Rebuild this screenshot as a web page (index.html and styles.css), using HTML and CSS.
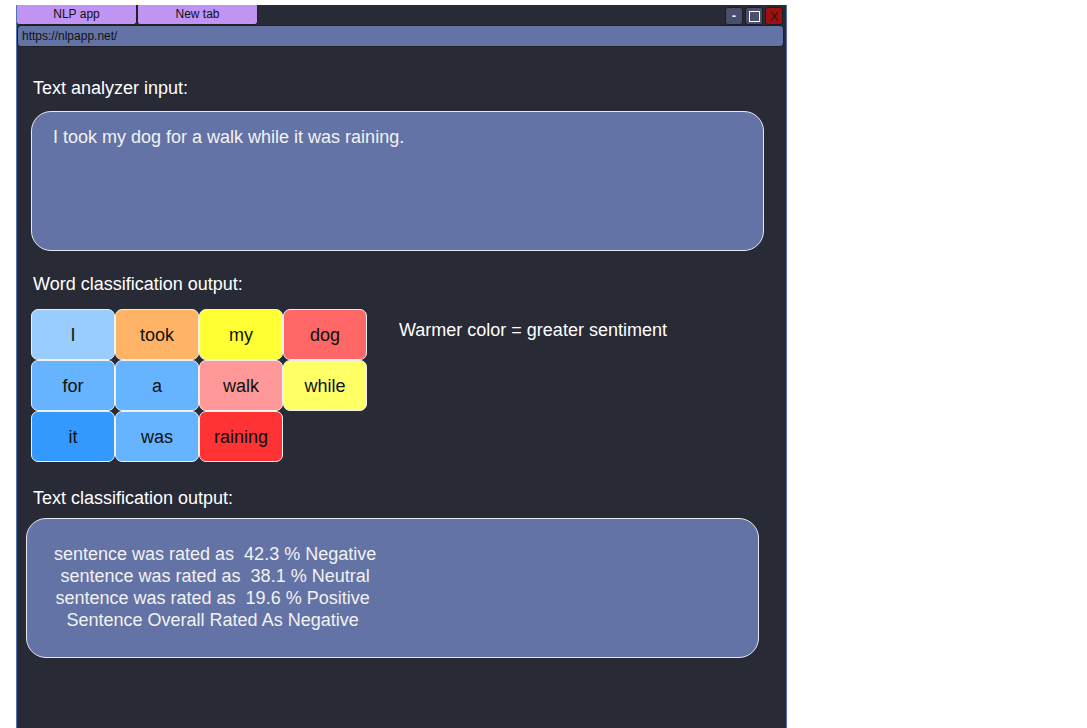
FILE: index.html
```html
<!DOCTYPE html>
<html>
<head>
<meta charset="utf-8">
<link rel="stylesheet" href="styles.css">
</head>
<body>
<div class="window">
  <div class="titlebar">
    <div class="tab">NLP app</div>
    <div class="tab">New tab</div>
    <div class="spacer"></div>
    <div class="ctrl ctrl-min">-</div>
    <div class="ctrl ctrl-max"><span class="sq"></span></div>
    <div class="ctrl ctrl-close">X</div>
  </div>
  <div class="urlbar">https://nlpapp.net/</div>
  <div class="content">
    <div class="label l1">Text analyzer input:</div>
    <div class="box input-box">I took my dog for a walk while it was raining.</div>
    <div class="label l2">Word classification output:</div>
    <div class="words-row">
      <div class="grid">
        <div class="cell c-i">I</div>
        <div class="cell c-took">took</div>
        <div class="cell c-my">my</div>
        <div class="cell c-dog">dog</div>
        <div class="cell c-for">for</div>
        <div class="cell c-a">a</div>
        <div class="cell c-walk">walk</div>
        <div class="cell c-while">while</div>
        <div class="cell c-it">it</div>
        <div class="cell c-was">was</div>
        <div class="cell c-raining">raining</div>
      </div>
      <div class="legend">Warmer color = greater sentiment</div>
    </div>
    <div class="label l3">Text classification output:</div>
    <div class="box output-box">
      <div class="result">sentence was rated as&nbsp; 42.3 % Negative<br>sentence was rated as&nbsp; 38.1 % Neutral<br>sentence was rated as&nbsp; 19.6 % Positive&nbsp;<br>Sentence Overall Rated As Negative&nbsp;</div>
    </div>
  </div>
</div>
</body>
</html>
```

FILE: styles.css
```css
html, body {
  margin: 0;
  padding: 0;
  background: #ffffff;
  font-family: "Liberation Sans", Arial, sans-serif;
}
.window {
  margin-left: 16px;
  margin-top: 5px;
  width: 769px;
  height: 740px;
  background: #282a36;
  border: 1px solid #4f74b0;
  border-top: none;
  display: flex;
  flex-direction: column;
}
.titlebar {
  display: flex;
  height: 20px;
  align-items: flex-start;
}
.tab {
  width: 119px;
  height: 19px;
  background: #bf94f3;
  border: 1px solid #222;
  border-top: none;
  border-left: none;
  border-radius: 0 0 3px 3px;
  font-size: 12px;
  line-height: 19px;
  text-align: center;
  color: #111;
}
.tab + .tab { border-left: 1px solid #222; }
.spacer { flex: 1; }
.ctrl {
  width: 16px;
  height: 16px;
  margin-top: 2px;
  margin-left: 2px;
  border: 1px solid #1c1d25;
  border-radius: 3px;
  background: #4b4f6b;
  color: #fff;
  font-size: 12px;
  line-height: 15px;
  text-align: center;
  display: flex;
  align-items: center;
  justify-content: center;
}
.ctrl-min { font-weight: bold; }
.sq {
  width: 9px;
  height: 9px;
  border: 1px solid #fff;
}
.ctrl-close {
  background: #a30e0e;
  color: #1a1a1a;
  font-size: 13px;
  margin-right: 3px;
}
.urlbar {
  height: 20px;
  margin-right: 2px;
  background: #6473a5;
  border: 1px solid #1c1d25;
  border-radius: 4px;
  font-size: 12px;
  line-height: 20px;
  padding-left: 4px;
  color: #111;
}
.content {
  padding: 31px 0 0 14px;
  color: #fff;
}
.label {
  font-size: 18px;
  line-height: 21px;
  height: 21px;
  padding-left: 2px;
}
.l1 { margin-bottom: 12px; }
.l2 { margin-top: 23px; margin-bottom: 14px; }
.l3 { margin-top: 26px; margin-bottom: 9px; }
.box {
  background: #6473a5;
  border: 1px solid #e8e8f0;
  border-radius: 20px;
  color: #f2f2f2;
  font-size: 18px;
  box-sizing: border-box;
}
.input-box {
  width: 733px;
  height: 140px;
  padding: 15px 0 0 21px;
  line-height: 21px;
}
.words-row {
  display: flex;
  align-items: flex-start;
}
.grid {
  display: grid;
  grid-template-columns: repeat(4, 84px);
  grid-template-rows: 51px 51px 51px;
  padding-top: 0;
}
.cell {
  border: 1px solid #f0f0f0;
  border-radius: 7px;
  display: flex;
  align-items: center;
  justify-content: center;
  font-size: 18px;
  color: #111;
  padding-top: 1px;
}
.c-i { background: #99ccff; }
.c-took { background: #ffb366; }
.c-my { background: #ffff33; }
.c-dog { background: #ff6666; }
.c-for { background: #66b3ff; }
.c-a { background: #66b3ff; }
.c-walk { background: #ff9999; }
.c-while { background: #ffff66; }
.c-it { background: #3399ff; }
.c-was { background: #66b3ff; }
.c-raining { background: #ff3333; }
.legend {
  font-size: 18px;
  line-height: 21px;
  margin-left: 32px;
  margin-top: 11px;
}
.output-box {
  width: 733px;
  height: 140px;
  margin-left: -5px;
  padding: 24px 0 0 27px;
}
.result {
  display: inline-block;
  text-align: center;
  line-height: 22px;
}
```
